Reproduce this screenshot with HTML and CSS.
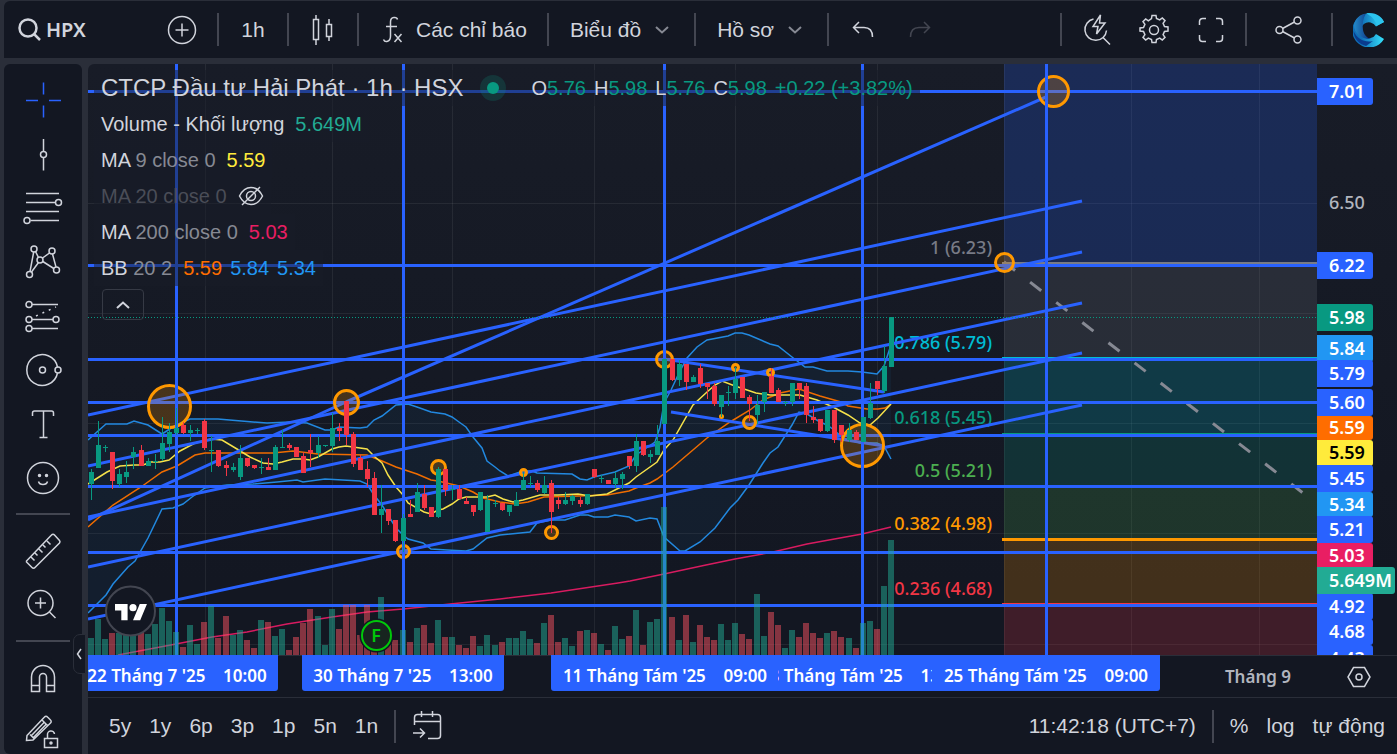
FILE: index.html
```html
<!DOCTYPE html>
<html lang="vi">
<head>
    <meta charset="UTF-8">
    <meta name="viewport" content="width=device-width, initial-scale=1.0">
    <title>HPX 5.98 +3.82%</title>
    <link rel="stylesheet" href="styles.css">
</head>
<body>

    <header class="toolbar">
        <button class="symbol">
            <svg width="24" height="24" viewBox="0 0 24 24" class="bold-icon"><circle cx="10" cy="10" r="8.5"/><path d="M16 16l6 6"/></svg>
            <span>HPX</span>
        </button>
        <button class="tool add" aria-label="So sánh">
            <svg width="30" height="30" viewBox="0 0 30 30"><circle cx="15" cy="15" r="13.5"/><path d="M15 8.500v13M8.500 15h13"/></svg>
        </button>
        <span class="divider"></span>
        <button class="tool interval">1h</button>
        <span class="divider"></span>
        <button class="tool style" aria-label="Nến">
            <svg width="24" height="32" viewBox="0 0 24 32"><path d="M2.500 5.500h5v20h-5zM5 1v4.500M5 25.500V31M15.500 10.500h5v12h-5zM18 5v5.500M18 22.500V27"/></svg>
        </button>
        <span class="divider"></span>
        <button class="text-tool indicators">
            <svg width="22" height="28" viewBox="0 0 22 28"><path d="M15.500 3.500C15 1 8.500 0 8.500 6V20C8.500 26 3 27 1.500 23.500M4 10.500h11M12.500 18l7 8M19.500 18l-7 8"/></svg>
            <span>Các chỉ báo</span>
        </button>
        <span class="divider"></span>
        <button class="text-tool">
            <span>Biểu đồ</span>
            <svg class="chevron" width="14" height="8" viewBox="0 0 14 8"><path d="M1 1l6 5.500L13 1"/></svg>
        </button>
        <span class="divider"></span>
        <button class="text-tool">
            <span>Hồ sơ</span>
            <svg class="chevron" width="14" height="8" viewBox="0 0 14 8"><path d="M1 1l6 5.500L13 1"/></svg>
        </button>
        <span class="divider"></span>
        <div class="history">
            <button class="tool" aria-label="Hoàn tác">
                <svg width="22" height="18" viewBox="0 0 22 18"><path d="M7 1L1.500 6.500 7 12M1.500 6.500H12c5 0 8.500 3 8.500 9.500"/></svg>
            </button>
            <button class="tool" aria-label="Làm lại" disabled>
                <svg width="22" height="18" viewBox="0 0 22 18"><path d="M15 1l5.500 5.500L15 12M20.500 6.500H10c-5 0-8.500 3-8.500 9.500"/></svg>
            </button>
        </div>

        <div class="toolbar-right">
            <span class="divider"></span>
            <div class="icons">
                <button class="tool" aria-label="Tìm nhanh">
                    <svg width="30" height="32" viewBox="0 0 30 32"><path d="M11.500 5A10.800 10.800 0 1 0 24.500 16.500M21 23.500l7 7M18.500 1l-7.500 11.500h5L14.500 20l8.500-11H17.500z"/></svg>
                </button>
                <button class="tool" aria-label="Cài đặt">
                    <svg width="32" height="32" viewBox="0 0 32 32"><circle cx="16" cy="16" r="4.500"/><path d="M13.500 4.500L14 1.500h4l.5 3 3.200 1.400 2.600-1.900 2.700 2.700-1.900 2.600 1.400 3.200 3.500.5v4l-3.500.5-1.400 3.200 1.900 2.600-2.700 2.700-2.600-1.900-3.200 1.400-.5 3h-4l-.5-3-3.200-1.400L7.700 26 5 23.300l1.900-2.600-1.400-3.200-3.500-.5v-3l3.500-.500 1.400-3.200L5 7.700 7.700 5l2.600 1.900z"/></svg>
                </button>
                <button class="tool" aria-label="Toàn màn hình">
                    <svg width="26" height="26" viewBox="0 0 26 26"><path d="M1.500 8V4.500a3 3 0 0 1 3-3H8M18 1.500h3.500a3 3 0 0 1 3 3V8M24.500 18v3.500a3 3 0 0 1-3 3H18M8 24.500H4.500a3 3 0 0 1-3-3V18"/></svg>
                </button>
            </div>
            <span class="divider"></span>
            <button class="tool share" aria-label="Chia sẻ">
                <svg width="28" height="28" viewBox="0 0 28 28"><circle cx="4.500" cy="14" r="3.500"/><circle cx="22.500" cy="4.500" r="3.500"/><circle cx="22.500" cy="23.500" r="3.500"/><path d="M7.500 12.500l12-6.500M7.500 15.500l12 6.500"/></svg>
            </button>
            <span class="divider"></span>
            <a href="#" class="brand" aria-label="Trang chủ">
                <svg width="32" height="34" viewBox="0 0 32 34">
                    <defs>
                        <linearGradient id="cyan" x1="0" y1="0" x2="1" y2="0"><stop offset="0.300" stop-color="#0f6fb8"/><stop offset="1" stop-color="#35e2fd"/></linearGradient>
                        <linearGradient id="navy" x1="0" y1="0" x2="1" y2="0"><stop offset="0" stop-color="#2489c8"/><stop offset="1" stop-color="#0b2f80"/></linearGradient>
                    </defs>
                    <path fill="url(#cyan)" d="M31 9A17 17 0 1 0 31 26L23 21A8 8 0 1 1 23 13.500z"/>
                    <path fill="url(#navy)" d="M1 12C2 6 7 1 13 .5 10 5 9 11 10 17c1 5 4 8 8 9-8 1-17-5-17-14z"/>
                    <path fill="#0a3b8c" d="M.5 18C4 26 12 30 20 28l-7 5C6 31 1 26 .5 18z"/>
                    <path fill="#2cc4ee" d="M13 .5c5 2 9 6 11 12l7-3.500C28 2 20-1 13 .5z"/>
                </svg>
            </a>
        </div>
    </header>

    <div class="workspace">
        <nav class="sidebar">
            <button class="draw active" aria-label="Con trỏ"><svg width="38" height="38" viewBox="0 0 38 38"><path d="M19.500 1.500v12M19.500 24.500v12M2 19.500h12M25 19.500h12"/></svg></button>
            <button class="draw" aria-label="Đường xu hướng"><svg width="38" height="38" viewBox="0 0 38 38"><circle cx="19.500" cy="19.500" r="3"/><path d="M19.500 4v12.500M19.500 22.500v13"/></svg></button>
            <button class="draw" aria-label="Fibonacci"><svg width="42" height="38" viewBox="0 0 42 38"><path d="M4 4.500h33M4 13.500h29.500M4 22.500h33M8.500 31.500H37"/><circle cx="36.500" cy="13.500" r="3"/><circle cx="5" cy="31.500" r="3"/></svg></button>
            <button class="draw" aria-label="Mẫu hình"><svg width="38" height="38" viewBox="0 0 38 38"><circle cx="10" cy="6" r="3"/><circle cx="28" cy="8" r="3"/><circle cx="16" cy="17" r="3"/><circle cx="5.500" cy="31.500" r="3"/><circle cx="32.500" cy="27" r="3"/><path d="M9.700 9L6 28.500M11.500 8.500l3 6M14.500 19.500l-7 9.500M18.500 15l7-5M18.800 18.500l11 7M28.500 11l3.500 13"/></svg></button>
            <button class="draw" aria-label="Dự báo"><svg width="38" height="38" viewBox="0 0 38 38"><circle cx="5" cy="7.500" r="3"/><circle cx="5" cy="22.500" r="3"/><circle cx="32" cy="22.500" r="3"/><circle cx="5" cy="31.500" r="3"/><path d="M8 7.500h26M8 22.500h21M8 31.500h26"/><path stroke-dasharray="2 5" d="M12 19l20-9"/></svg></button>
            <button class="draw" aria-label="Hình khối"><svg width="38" height="38" viewBox="0 0 38 38"><path d="M33.500 16A15.500 15.500 0 1 0 33.500 22"/><circle cx="18.500" cy="19" r="3"/><circle cx="34" cy="19" r="3"/></svg></button>
            <button class="draw" aria-label="Văn bản"><svg width="38" height="38" viewBox="0 0 38 38"><path d="M8.500 11V8a2 2 0 0 1 2-2h17a2 2 0 0 1 2 2v3M19.500 6v26.500M15.500 32.500h8"/></svg></button>
            <button class="draw" aria-label="Biểu tượng"><svg width="38" height="38" viewBox="0 0 38 38"><circle cx="19" cy="19" r="15.500"/><path d="M14.500 22.500c1 4 8 4 9 0"/><circle class="solid" cx="15.500" cy="16.500" r="1"/><circle class="solid" cx="22.500" cy="16.500" r="1"/></svg></button>
            <hr>
            <button class="draw" aria-label="Đo"><svg width="38" height="38" viewBox="0 0 38 38"><path d="M2.500 29L27.500 3a2 2 0 0 1 3 0l5 5.500a2 2 0 0 1 0 2.500L11 35.500a2 2 0 0 1-3 0L2.500 30zM7 25l3.500 3.500M11 21l2.500 2.500M15 17l3.500 3.500M19 13l2.500 2.500M23 9l3.500 3.500"/></svg></button>
            <button class="draw" aria-label="Phóng to"><svg width="38" height="38" viewBox="0 0 38 38"><circle cx="16.500" cy="17" r="12.500"/><path d="M25.500 26l6 6M16.500 11.500v11M11 17h11"/></svg></button>
            <hr>
            <button class="draw" aria-label="Nam châm"><svg width="38" height="38" viewBox="0 0 38 38"><path d="M7.500 32.500V18a11.500 11.500 0 0 1 23 0v14.500h-8V18a3.500 3.500 0 0 0-7 0v14.500zM7.500 26.500h8M22.500 26.500h8"/></svg></button>
            <button class="draw" aria-label="Khóa vẽ"><svg width="38" height="38" viewBox="0 0 38 38"><path d="M3 22.500L20.500 4a2 2 0 0 1 3 0l3 3a2 2 0 0 1 0 3L9 27l-6.500.5zM18 7l6 6M6 21.500l4.500 4.500M20 9.500L7.500 22.500M22 11.500L9 25M20.500 25.500h13v9h-13zM23.500 25.500V22a3.500 3.500 0 0 1 7-1"/><circle class="solid" cx="27" cy="30" r="1"/></svg></button>
            <button class="collapse" aria-label="Thu gọn"><svg width="6" height="12" viewBox="0 0 6 12"><path d="M5 1L1.500 6 5 11"/></svg></button>
        </nav>

        <main class="chart">
            <section class="pane">
                <svg id="plot" width="100%" height="100%" role="img" aria-label="Biểu đồ HPX"></svg>
                <div class="legend">
                    <div class="legend-row title">
                        <h1>CTCP Đầu tư Hải Phát · 1h · HSX</h1>
                        <span class="status"></span>
                        <div class="ohlc">
                            <span>O<b>5.76</b></span>
                            <span>H<b>5.98</b></span>
                            <span>L<b>5.76</b></span>
                            <span>C<b>5.98</b></span>
                            <b>+0.22 (+3.82%)</b>
                        </div>
                    </div>
                    <div class="legend-row"><span>Volume - Khối lượng</span><span class="teal">5.649M</span></div>
                    <div class="legend-row"><span>MA <i>9 close 0</i></span><span class="yellow">5.59</span></div>
                    <div class="legend-row">
                        <span class="off">MA 20 close 0</span>
                        <svg class="eye" width="26" height="20" viewBox="0 0 26 20"><path d="M1.500 10C4.500 4 9 1.500 13 1.500S21.500 4 24.500 10C21.500 16 17 18.500 13 18.500S4.500 16 1.500 10z"/><circle cx="13" cy="10" r="4.500"/><path d="M4 19L22 1"/></svg>
                    </div>
                    <div class="legend-row"><span>MA <i>200 close 0</i></span><span class="pink">5.03</span></div>
                    <div class="legend-row"><span>BB <i>20 2</i></span><span class="bands"><span class="orange">5.59</span><span class="blue">5.84</span><span class="blue">5.34</span></span></div>
                    <button class="legend-toggle" aria-label="Ẩn chỉ báo"><svg width="14" height="8" viewBox="0 0 14 8"><path d="M1 7l6-5.500L13 7"/></svg></button>
                </div>
            </section>
            <svg id="priceAxis" width="100%" height="100%"></svg>
            <svg id="timeAxis" width="100%" height="100%"></svg>
            <button class="axis-settings" aria-label="Cài đặt trục"><svg width="24" height="22" viewBox="0 0 24 22"><path d="M6.500 1.500h11L23 11l-5.500 9.500h-11L1 11z"/><circle cx="12" cy="11" r="3"/></svg></button>
            <footer class="range-bar">
                <button>5y</button>
                <button>1y</button>
                <button>6p</button>
                <button>3p</button>
                <button>1p</button>
                <button>5n</button>
                <button>1n</button>
                <span class="divider"></span>
                <button aria-label="Đi đến ngày"><svg width="30" height="30" viewBox="0 0 30 30"><path d="M2.500 14V6.500a3 3 0 0 1 3-3h20a3 3 0 0 1 3 3v18a3 3 0 0 1-3 3H16M2.500 10.500h26M9.500 0v6M20.500 0v6M1 22h11M8 17.500l4.500 4.500L8 26.500"/></svg></button>
                <button class="clock">11:42:18 (UTC+7)</button>
                <span class="divider"></span>
                <button>%</button>
                <button>log</button>
                <button>tự động</button>
            </footer>
        </main>
    </div>

    <script src="chart.js"></script>
</body>
</html>
```
FILE: styles.css
```css
* {
    box-sizing: border-box;
}

body {
    margin: 0;
    height: 100vh;
    padding: 1px 0 0 4px;
    display: flex;
    flex-direction: column;
    gap: 6px;
    overflow: hidden;
    background-color: #2a2e39;
    color: #d1d4dc;
    font-family: "Liberation Sans", Arial, sans-serif;
    font-size: 20px;
}

button {
    margin: 0;
    padding: 0;
    border: 0;
    background: none;
    color: inherit;
    font: inherit;
    white-space: nowrap;
    cursor: pointer;
}

svg {
    display: block;
    flex-shrink: 0;
}

button svg,
.eye {
    fill: none;
    stroke: currentColor;
    stroke-width: 1.5;
}

/* Thanh công cụ trên */
.toolbar {
    height: 57px;
    flex-shrink: 0;
    display: flex;
    align-items: center;
    background-color: #131722;
    border-top-left-radius: 6px;
    font-size: 21px;
}

.divider {
    width: 2px;
    height: 33px;
    flex-shrink: 0;
    background-color: #434651;
}

.symbol {
    display: flex;
    align-items: center;
    gap: 4px;
    width: 142px;
    padding-left: 14px;
    font-family: "Noto Sans", sans-serif;
    font-size: 20px;
    font-weight: 600;
}

.bold-icon {
    stroke-width: 2.5;
}

.tool {
    width: 57px;
    display: flex;
    align-items: center;
    justify-content: center;
}

.tool:disabled {
    color: #434651;
}

.add {
    width: 71px;
}

.interval,
.style {
    width: 68px;
}

.text-tool {
    display: flex;
    align-items: center;
    gap: 14px;
    padding: 0 25px 0 21px;
}

.indicators {
    padding-left: 23px;
    padding-right: 20px;
    gap: 12px;
}

.chevron {
    color: #868993;
    stroke-width: 2;
}

.history {
    display: flex;
    padding-left: 5px;
}

.toolbar-right {
    display: flex;
    align-items: center;
    margin-left: auto;
}

.icons {
    display: flex;
    padding: 0 6px;
}

.share {
    width: 84px;
}

.brand {
    padding: 0 12px 0 20px;
}

.workspace {
    flex: 1;
    min-height: 0;
    display: flex;
    gap: 6px;
}

/* Thanh vẽ bên trái */
.sidebar {
    position: relative;
    width: 78px;
    flex-shrink: 0;
    display: flex;
    flex-direction: column;
    align-items: center;
    padding-top: 9px;
    background-color: #131722;
    border-radius: 6px 6px 0 6px;
}

.draw {
    height: 54px;
    flex-shrink: 0;
}

.active {
    color: #2962ff;
}

.solid {
    fill: currentColor;
}

hr {
    width: 54px;
    height: 2px;
    flex-shrink: 0;
    margin: 8px 0 9px;
    border: 0;
    background-color: #434651;
}

.collapse {
    position: absolute;
    right: -4px;
    top: 570px;
    width: 13px;
    height: 40px;
    padding-left: 2px;
    background-color: #131722;
    border: 1px solid #2a2e39;
    border-radius: 7px 0 0 7px;
}

/* Biểu đồ */
.chart {
    flex: 1;
    min-width: 0;
    display: grid;
    grid-template-columns: 1fr 80px;
    grid-template-rows: 1fr 42px 57px;
    overflow: hidden;
    background: linear-gradient(#181c27, #131722 75%);
    border-top-left-radius: 6px;
}

.pane {
    position: relative;
    min-height: 0;
    overflow: hidden;
}

.axis-text {
    font-family: "Noto Sans", sans-serif;
    font-size: 18px;
    font-weight: 500;
}

.strong {
    font-weight: 600;
}

.time {
    font-size: 17px;
}

#priceAxis,
#timeAxis {
    min-height: 0;
    overflow: hidden;
}

.axis-settings {
    display: flex;
    align-items: center;
    justify-content: center;
    padding-left: 4px;
    border-top: 1px solid #2a2e39;
}

.legend {
    position: absolute;
    top: 6px;
    left: 6px;
    display: flex;
    flex-direction: column;
    align-items: flex-start;
}

.legend-row {
    height: 36px;
    display: flex;
    align-items: center;
    gap: 11px;
    padding: 0 7px;
    background-color: rgba(24, 28, 39, 0.5);
    white-space: nowrap;
}

.title {
    gap: 24px;
}

.legend h1 {
    margin: 0;
    font-size: 24px;
    font-weight: normal;
}

.status {
    width: 12px;
    height: 12px;
    border-radius: 50%;
    background-color: #089981;
    box-shadow: 0 0 0 7px rgba(8, 153, 129, 0.2);
}

.ohlc {
    display: flex;
    gap: 8px;
    padding-left: 8px;
}

.ohlc b {
    color: #089981;
    font-weight: normal;
}

.legend i {
    color: #868993;
    font-style: normal;
}

.off {
    color: #4a4d57;
}

.bands {
    display: flex;
    gap: 8px;
}

.teal { color: #22ab94; }
.yellow { color: #ffeb3b; }
.pink { color: #e91e63; }
.orange { color: #ff6d00; }
.blue { color: #2196f3; }

.legend-toggle {
    display: flex;
    align-items: center;
    justify-content: center;
    width: 42px;
    height: 31px;
    margin: 3px 0 0 8px;
    border: 1px solid #363a45;
    border-radius: 4px;
}

.legend-toggle svg {
    stroke-width: 2;
}

/* Thanh khoảng thời gian */
.range-bar {
    grid-column: 1 / 3;
    display: flex;
    align-items: center;
    padding: 0 3px 0 12px;
    border-top: 1px solid #2a2e39;
    font-size: 21px;
}

.range-bar button {
    padding: 0 9px;
}

.range-bar .divider {
    margin: 0 7px;
}

.range-bar .clock {
    margin-left: auto;
}
```
FILE: chart.js
```js
const NS = 'http://www.w3.org/2000/svg';
const GREEN = '#089981';
const RED = '#f23645';
const BLUE = '#2962ff';
const ORANGE = '#ff9800';
const FAR = 4000;
const BOTTOM = 655;

// [đỉnh thân, đáy thân, cao, thấp, tăng, đỉnh khối lượng]
const candles = [
    [472, 484, 469, 500, 1, 638], [445, 468, 421, 468, 1, 619], [447, 448, 445, 452, 1, 639], [452, 481, 452, 489, 0, 633],
    [474, 484, 469, 487, 1, 633], [472, 477, 461, 483, 1, 630], [452, 457, 447, 469, 1, 632], [450, 466, 445, 466, 0, 632],
    [461, 466, 458, 466, 1, 634], [461, 462, 454, 469, 1, 624], [443, 459, 417, 461, 1, 608], [432, 444, 423, 452, 1, 621],
    [428, 433, 408, 435, 1, 632], [425, 433, 422, 434, 0, 647], [430, 433, 425, 441, 1, 625], [430, 431, 428, 434, 1, 644],
    [421, 448, 419, 450, 0, 622], [450, 451, 436, 472, 1, 606], [450, 466, 450, 467, 0, 638], [465, 468, 461, 476, 0, 616],
    [467, 470, 463, 472, 1, 635], [458, 477, 445, 480, 1, 630], [458, 466, 458, 467, 0, 640], [465, 468, 465, 469, 0, 648],
    [467, 468, 458, 474, 1, 620], [467, 470, 458, 470, 0, 622], [447, 470, 445, 470, 1, 636], [447, 448, 430, 448, 1, 629],
    [445, 448, 443, 450, 0, 650], [447, 457, 447, 457, 0, 637], [456, 473, 452, 473, 0, 623], [450, 453, 434, 467, 0, 609],
    [445, 453, 436, 458, 1, 616], [445, 446, 445, 447, 1, 645], [428, 446, 413, 452, 1, 609], [428, 431, 423, 441, 0, 629],
    [401, 435, 401, 445, 0, 605], [434, 464, 432, 467, 0, 605], [458, 470, 455, 470, 0, 635], [469, 479, 461, 487, 0, 605],
    [478, 515, 472, 515, 0, 651], [509, 515, 485, 533, 1, 597], [509, 521, 509, 525, 0, 637], [520, 541, 520, 542, 0, 640],
    [518, 541, 514, 552, 1, 630], [514, 517, 500, 517, 0, 642], [492, 512, 483, 512, 1, 628], [494, 508, 485, 510, 0, 625],
    [507, 517, 507, 517, 0, 643], [469, 517, 467, 518, 1, 620], [469, 490, 469, 496, 0, 637], [489, 490, 485, 500, 1, 637],
    [489, 499, 485, 499, 0, 645], [501, 504, 497, 504, 0, 648], [505, 512, 505, 516, 0, 636], [492, 510, 492, 511, 1, 646],
    [500, 532, 495, 532, 1, 635], [503, 504, 500, 507, 1, 645], [503, 510, 503, 511, 0, 642], [505, 512, 505, 516, 1, 638],
    [500, 506, 492, 506, 1, 638], [480, 490, 472, 490, 1, 631], [483, 484, 476, 487, 1, 639], [483, 490, 480, 492, 0, 643],
    [485, 493, 476, 494, 1, 623], [483, 512, 480, 533, 0, 615], [500, 504, 497, 509, 0, 642], [500, 504, 492, 505, 1, 638],
    [496, 501, 495, 505, 1, 646], [500, 504, 497, 507, 0, 631], [494, 504, 494, 505, 1, 630], [469, 477, 469, 478, 0, 633],
    [478, 479, 475, 483, 1, 644], [480, 484, 480, 484, 0, 650], [478, 484, 472, 488, 1, 626], [474, 479, 472, 489, 1, 639],
    [456, 466, 456, 469, 0, 636], [441, 466, 434, 472, 1, 610], [441, 455, 441, 456, 0, 645], [454, 457, 450, 463, 1, 622],
    [441, 455, 425, 455, 1, 619], [359, 424, 359, 424, 1, 507], [359, 380, 359, 381, 0, 617], [364, 380, 360, 386, 1, 640],
    [364, 382, 364, 390, 0, 615], [377, 382, 375, 382, 1, 642], [368, 384, 364, 388, 0, 625], [383, 387, 383, 399, 0, 637],
    [386, 404, 383, 406, 0, 640], [395, 407, 395, 417, 1, 624], [392, 393, 386, 406, 1, 640], [379, 393, 367, 399, 1, 623],
    [377, 398, 377, 398, 0, 634], [397, 404, 395, 421, 0, 639], [405, 415, 395, 424, 1, 594], [392, 402, 392, 412, 1, 636],
    [376, 393, 368, 393, 0, 612], [390, 402, 388, 402, 0, 625], [402, 403, 401, 406, 1, 648], [383, 402, 383, 406, 1, 630],
    [383, 389, 383, 399, 0, 637], [386, 415, 383, 423, 0, 623], [417, 420, 406, 423, 0, 633], [419, 431, 419, 432, 0, 638],
    [410, 431, 410, 432, 1, 633], [410, 440, 410, 443, 0, 631], [425, 435, 425, 442, 0, 637], [430, 440, 423, 442, 1, 638],
    [432, 440, 430, 440, 0, 648], [417, 442, 417, 442, 1, 623], [403, 418, 383, 419, 1, 621], [381, 389, 381, 395, 0, 629],
    [366, 391, 346, 393, 1, 586], [317, 367, 317, 367, 1, 540]
];

const ma9 = '88,484 107,472 120,466 134,465 143,465 151,462 160,462 169,460 180,451 195,443 211,439 222,440 237,449 250,457 263,463 273,464 282,462 293,459 303,459 310,460 318,457 332,449 339,447 346,446 367,449 375,457 382,463 388,475 396,487 403,495 408,503 424,512 431,514 438,510 443,509 452,504 459,499 466,497 487,497 495,495 503,499 513,502 523,500 540,495 558,495 578,494 590,496 607,494 629,483 636,477 657,462 664,450 673,440 693,405 707,392 715,385 722,381 735,386 756,393 770,395 800,395 817,400 833,407 848,415 860,423 870,425 878,418 891,404';
const basis = '88,527 113,505 141,487 162,472 177,466 195,455 205,453 253,453 273,453 293,451 318,454 367,455 382,461 396,467 417,474 431,480 438,481 459,486 473,492 483,498 500,502 515,504 528,502 544,497 578,496 607,495 629,491 636,488 650,483 657,479 673,467 707,438 730,422 750,410 763,400 780,393 799,389 820,396 841,402 848,406 867,409 878,409 885,408 891,404';
const upper = '88,440 106,424 127,424 134,421 148,425 162,434 176,425 190,419 218,419 253,422 267,423 290,422 307,423 325,430 332,430 339,427 360,428 367,427 374,420 382,416 396,405 408,404 417,407 431,412 445,414 452,417 459,422 466,427 473,437 482,448 487,461 495,467 500,471 508,476 523,471 532,471 537,473 572,474 580,479 587,480 594,477 615,472 629,466 636,455 655,442 660,427 664,403 671,390 679,373 687,358 697,347 707,340 728,336 735,333 742,333 749,335 770,344 778,346 792,357 805,367 813,367 827,371 848,371 862,372 877,374 884,366 891,345';
const lower = '88,613 106,595 113,584 128,567 135,561 148,538 162,509 173,508 183,504 192,497 205,488 227,485 253,484 277,482 297,480 303,482 325,479 360,481 367,484 374,495 382,505 388,515 396,528 403,535 408,539 423,543 431,549 447,550 466,551 473,549 487,538 500,535 530,532 537,523 551,520 565,520 580,515 588,515 594,517 608,517 615,515 629,517 636,521 650,518 657,519 664,537 680,551 685,551 700,542 715,528 730,508 738,500 749,485 763,463 770,453 778,447 792,425 799,412 807,414 820,422 827,425 834,430 843,438 860,443 877,443 884,446 891,459';
const ma200 = '118,655 176,644 212,637 247,632 287,624 332,617 367,612 403,609 450,604 500,599 551,593 618,583 630,581 664,574 706,565 735,559 773,552 807,544 862,534 891,527';

// Các vùng Fibonacci: [trên, dưới, nền, màu đường, nhãn]
const fib = [
    [0, 263, 'rgba(41,98,255,0.22)'],
    [263, 358, 'rgba(120,123,134,0.2)', '#787b86', '1 (6.23)'],
    [358, 434, 'rgba(0,188,212,0.2)', '#00bcd4', '0.786 (5.79)'],
    [434, 486, 'rgba(8,153,129,0.2)', '#089981', '0.618 (5.45)'],
    [486, 539, 'rgba(76,175,80,0.2)', '#4caf50', '0.5 (5.21)'],
    [539, 604, 'rgba(255,152,0,0.2)', '#ff9800', '0.382 (4.98)'],
    [604, 700, 'rgba(242,54,69,0.2)', '#f23645', '0.236 (4.68)']
];
const fibLabelY = [0, 248, 343, 418, 471, 524, 589];

const levels = [91, 265, 359, 402, 435, 486, 552, 605];
const times = [176, 403, 664, 862, 1046];
const circles = [
    [169, 406, 21], [346, 402, 12], [403, 551, 6], [438, 467, 7], [523, 472, 3], [551, 532, 6], [664, 359, 8],
    [721, 416, 1], [735, 367, 3], [749, 422, 6], [770, 372, 3], [862, 445, 21], [1053, 91, 15], [1004, 262, 9]
];

const priceTags = [
    ['7.01', 78, 27, BLUE], ['6.22', 252, 27, BLUE], ['5.98', 304, 27, GREEN], ['5.84', 335, 27, '#2196f3'],
    ['5.79', 360, 27, BLUE], ['5.60', 389, 27, BLUE], ['5.59', 416, 24, '#ff6d00'], ['5.59', 440, 26, '#ffeb3b', '#000'],
    ['5.45', 465, 27, BLUE], ['5.34', 492, 25, '#2196f3'], ['5.21', 516, 27, BLUE], ['5.03', 543, 25, '#e91e63'],
    ['4.92', 593, 27, BLUE], ['4.68', 619, 26, BLUE], ['4.43', 645, 27, BLUE], ['5.649M', 567, 27, '#22ab94']
];

const timeTags = [
    [177, 203, "22 Tháng 7 '25", '10:00'],
    [403, 202, "30 Tháng 7 '25", '13:00'],
    [862, 227, "18 Tháng Tám '25", '13:00'],
    [665, 227, "11 Tháng Tám '25", '09:00'],
    [1046, 228, "25 Tháng Tám '25", '09:00']
];

function add(parent, tag, attrs, text) {
    const node = document.createElementNS(NS, tag);
    for (const key in attrs) node.setAttribute(key, attrs[key]);
    if (text) node.textContent = text;
    parent.appendChild(node);
    return node;
}

function line(g, x1, y1, x2, y2, color, width, dash) {
    return add(g, 'line', { x1, y1, x2, y2, stroke: color, 'stroke-width': width, 'stroke-dasharray': dash || 'none' });
}

function poly(g, points, color, width) {
    add(g, 'polyline', { points, fill: 'none', stroke: color, 'stroke-width': width });
}

function label(g, x, y, color, anchor, text, extra) {
    add(g, 'text', { x, y: y + 6, fill: color, 'text-anchor': anchor, class: 'axis-text ' + (extra || '') }, text);
}

function drawPlot() {
    const g = add(document.getElementById('plot'), 'g', { transform: 'translate(-88 -64)' });
    const candleX = i => Math.round(91 + i * 7.08);

    for (const x of [205, 332, 452, 594, 735, 877, 1004, 1131, 1259]) line(g, x + 0.5, 64, x + 0.5, BOTTOM, 'rgba(242,242,242,0.07)', 1);
    for (const y of [203, 313, 423, 533, 644]) line(g, 88, y + 0.5, FAR, y + 0.5, 'rgba(242,242,242,0.07)', 1);

    for (const [top, bottom, fill] of fib) add(g, 'rect', { x: 1004, y: top, width: FAR, height: bottom - top, fill });
    line(g, 1004, 262, 1303, 493, '#868993', 3, '14 19');

    add(g, 'polygon', { points: upper + ' ' + lower.split(' ').reverse().join(' '), fill: 'rgba(33,150,243,0.06)' });

    poly(g, ma200, '#d81b60', 1.5);
    poly(g, upper, '#2288df', 1.5);
    poly(g, lower, '#2288df', 1.5);
    poly(g, basis, '#ef6c00', 1.5);
    poly(g, ma9, '#f5e14a', 1.5);

    fib.forEach(([top, , , color, name], i) => {
        if (!color) return;
        line(g, 1002, top + 0.5, FAR, top + 0.5, color, 3);
        label(g, 992, fibLabelY[i], color, 'end', name);
    });

    for (const y of levels) line(g, 88, y + 0.5, FAR, y + 0.5, BLUE, 3);
    for (const end of [201, 252, 303, 353, 405]) line(g, 88, end + 214, 1082, end, BLUE, 3);
    line(g, 88, 520, 346, 402, BLUE, 3);
    line(g, 346, 402, 1046, 97, BLUE, 3);
    line(g, 664, 359, 884, 392, BLUE, 3);
    line(g, 671, 412, 884, 446, BLUE, 3);

    for (const [cx, cy, r] of circles) {
        add(g, 'circle', { cx: cx + 0.5, cy: cy + 0.5, r, fill: 'rgba(255,152,0,0.22)', stroke: ORANGE, 'stroke-width': 3 });
    }

    for (const x of times) line(g, x + 0.5, 64, x + 0.5, BOTTOM, BLUE, 3);

    candles.forEach(([top, bottom, high, low, up, volume], i) => {
        const x = candleX(i);
        const color = up ? GREEN : RED;
        add(g, 'rect', { x: x - 3, y: volume, width: 6, height: BOTTOM - volume, fill: up ? '#22ab94' : '#f7525f', opacity: 0.5 });
        add(g, 'rect', { x, y: high, width: 1, height: low - high, fill: color });
        add(g, 'rect', { x: x - 2, y: top, width: 5, height: bottom - top, fill: color });
    });

    line(g, 88, 317.5, FAR, 317.5, GREEN, 1, '1 2');

    // Mốc sự kiện
    add(g, 'circle', { cx: 376.5, cy: 635.5, r: 16, fill: '#131722', stroke: '#131722', 'stroke-width': 2 });
    add(g, 'circle', { cx: 376.5, cy: 635.5, r: 14.5, fill: '#17251f', stroke: '#00c80a', 'stroke-width': 2 });
    label(g, 376, 636, '#00c80a', 'middle', 'F', 'strong');

    // Logo
    add(g, 'circle', { cx: 130.5, cy: 611, r: 24.5, fill: '#131722', stroke: '#434651', 'stroke-width': 2 });
    const logo = add(g, 'g', { transform: 'translate(115 600.500) scale(0.900)', fill: '#fff' });
    add(logo, 'path', { d: 'M14 22H7V11H0V4h14v18zM28 22h-8l7.500-18h8L28 22z' });
    add(logo, 'circle', { cx: 20, cy: 8, r: 4 });
}

function drawPriceAxis() {
    const g = add(document.getElementById('priceAxis'), 'g', { transform: 'translate(0 -64)' });
    label(g, 12, 203, '#b2b5be', 'start', '6.50');
    for (const [text, y, height, fill, color] of priceTags) {
        add(g, 'rect', { x: -4, y, width: text.length > 4 ? 82 : 60, height, rx: 3, fill });
        label(g, 12, y + Math.round(height / 2), color || '#fff', 'start', text, 'strong');
    }
}

function drawTimeAxis() {
    const g = add(document.getElementById('timeAxis'), 'g', { transform: 'translate(-88 -655)' });
    line(g, 88, 655.5, FAR, 655.5, '#2a2e39', 1);
    label(g, 1258, 677, '#b2b5be', 'middle', 'Tháng 9', 'strong time');
    for (const [x, width, day, hour] of timeTags) {
        add(g, 'rect', { x: x - Math.round(width / 2), y: 650, width, height: 41, rx: 3, fill: BLUE });
        label(g, x, 676, '#fff', 'middle', day + '\u00a0\u00a0\u00a0\u00a0' + hour, 'strong time');
    }
}

drawPlot();
drawPriceAxis();
drawTimeAxis();
```
